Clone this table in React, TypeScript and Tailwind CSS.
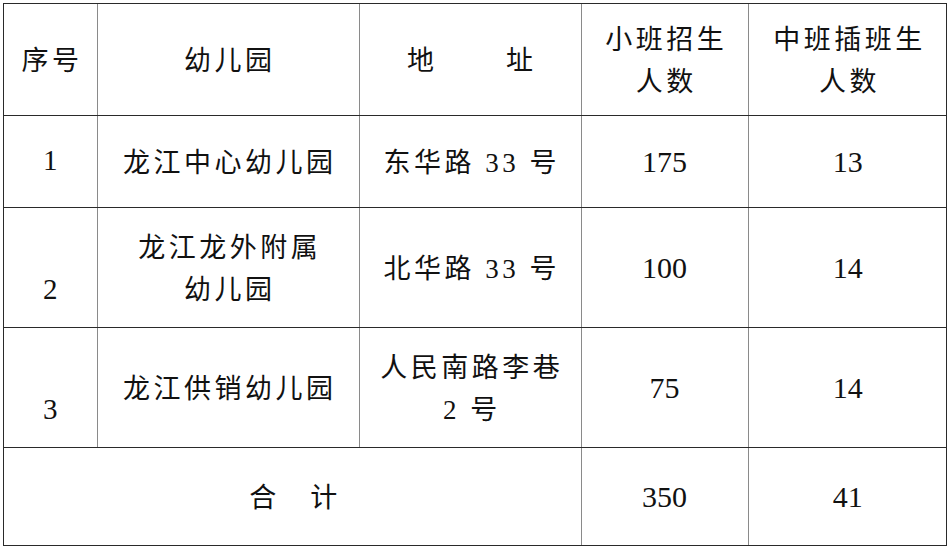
import React from 'react';

const font = { fontFamily: '"Liberation Serif", "Noto Sans CJK SC", serif' };

const cell = 'border-x-[1.5px] border-x-[#8a8a8a] border-y-[1.5px] border-y-[#2a2a2a] text-center align-middle p-0';

const rows = [
  { no: '1', name: ['龙江中心幼儿园'], addr: ['东华路 33 号'], small: '175', mid: '13', h: 'h-[92px]' },
  { no: '2', name: ['龙江龙外附属', '幼儿园'], addr: ['北华路 33 号'], small: '100', mid: '14', h: 'h-[120px]' },
  { no: '3', name: ['龙江供销幼儿园'], addr: ['人民南路李巷', '2 号'], small: '75', mid: '14', h: 'h-[120px]' },
];

function Lines({ lines }: { lines: string[] }) {
  return (
    <div className="leading-[42px] tracking-[3.5px] pl-[3.5px] pt-[4px]">
      {lines.map((l) => (
        <div key={l}>{l}</div>
      ))}
    </div>
  );
}

export default function App() {
  return (
    <div className="w-[950px] h-[548px] bg-white pt-[3px] pl-[3px]" style={font}>
      <div className="w-[944px] border-[1.5px] border-[#2a2a2a] text-[27px] text-[#111]">
        <table className="w-full border-collapse border-hidden table-fixed">
          <colgroup>
            <col className="w-[93px]" />
            <col className="w-[262px]" />
            <col className="w-[222px]" />
            <col className="w-[167px]" />
            <col className="w-[199px]" />
          </colgroup>
          <tbody>
            <tr className="h-[111px]">
              <td className={cell}><Lines lines={['序号']} /></td>
              <td className={cell}><Lines lines={['幼儿园']} /></td>
              <td className={cell}>
                <div className="flex justify-center gap-[72px] leading-[42px] pt-[4px]">
                  <span>地</span>
                  <span>址</span>
                </div>
              </td>
              <td className={cell}><Lines lines={['小班招生', '人数']} /></td>
              <td className={cell}><Lines lines={['中班插班生', '人数']} /></td>
            </tr>
            {rows.map((r) => (
              <tr key={r.no} className={r.h}>
                <td className={cell}>
                  <div className={r.no === '1' ? 'text-[29px]' : 'text-[29px] pt-[46px]'}>{r.no}</div>
                </td>
                <td className={cell}><Lines lines={r.name} /></td>
                <td className={cell}><Lines lines={r.addr} /></td>
                <td className={cell}><span className="text-[30px]">{r.small}</span></td>
                <td className={cell}><span className="text-[30px]">{r.mid}</span></td>
              </tr>
            ))}
            <tr className="h-[98px]">
              <td className={cell} colSpan={3}>
                <div className="flex justify-center gap-[34px] pl-[2px] pt-[4px]">
                  <span>合</span>
                  <span>计</span>
                </div>
              </td>
              <td className={cell}><span className="text-[30px]">350</span></td>
              <td className={cell}><span className="text-[30px]">41</span></td>
            </tr>
          </tbody>
        </table>
      </div>
    </div>
  );
}
